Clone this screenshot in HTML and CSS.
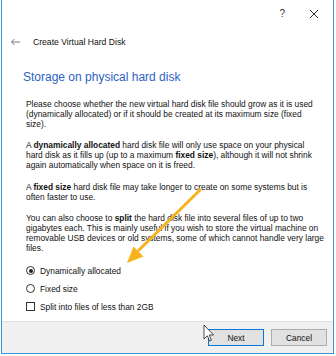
FILE: index.html
```html
<!DOCTYPE html>
<html lang="en">
<head>
  <meta charset="UTF-8">
  <title>Create Virtual Hard Disk</title>
  <link rel="stylesheet" href="styles.css">
</head>
<body>
  <div class="window">
    <div class="titlebar">
      <span class="help">?</span>
      <svg class="close" width="10" height="10" viewBox="0 0 10 10">
        <path d="M1 1 L9 9 M9 1 L1 9" stroke="#333" stroke-width="1"/>
      </svg>
    </div>

    <div class="nav">
      <svg class="back" width="10" height="8" viewBox="0 0 10 8">
        <path d="M10 4 H1.5 M4.5 1 L1.5 4 L4.5 7" fill="none" stroke="#777" stroke-width="1"/>
      </svg>
      <span class="nav-title">Create Virtual Hard Disk</span>
    </div>

    <h1 class="heading">Storage on physical hard disk</h1>

    <div class="content">
      <p>Please choose whether the new virtual hard disk file should grow as it is used<br>(dynamically allocated) or if it should be created at its maximum size (fixed<br>size).</p>
      <p>A <b>dynamically allocated</b> hard disk file will only use space on your physical<br>hard disk as it fills up (up to a maximum <b>fixed size</b>), although it will not shrink<br>again automatically when space on it is freed.</p>
      <p>A <b>fixed size</b> hard disk file may take longer to create on some systems but is<br>often faster to use.</p>
      <p>You can also choose to <b>split</b> the hard disk file into several files of up to two<br>gigabytes each. This is mainly useful if you wish to store the virtual machine on<br>removable USB devices or old systems, some of which cannot handle very large<br>files.</p>

      <div class="options">
        <div class="option"><span class="radio checked"></span>Dynamically allocated</div>
        <div class="option"><span class="radio"></span>Fixed size</div>
        <div class="option"><span class="check"></span>Split into files of less than 2GB</div>
      </div>
    </div>

    <div class="footer">
      <button class="btn default">Next</button>
      <button class="btn">Cancel</button>
    </div>
  </div>

  <!-- annotation arrow and mouse pointer drawn over the dialog -->
  <svg class="overlay" width="336" height="356" viewBox="0 0 336 356">
    <line x1="200" y1="190" x2="139" y2="250" stroke="#f6b31c" stroke-width="3" stroke-linecap="round"/>
    <polygon points="127,263 143.5,256.5 133.5,246.5" fill="#f6b31c"/>
    <path d="M204 325 L204 339 L207.3 335.8 L209.6 341 L211.4 340.2 L209.2 335 L213.6 335 Z" fill="#fff" stroke="#222" stroke-width="0.8"/>
  </svg>
</body>
</html>
```

FILE: styles.css
```css
body {
  margin: 0;
  background-color: #fff;
  font-family: 'Liberation Sans', Arial, sans-serif;
  color: #111;
}

.window {
  position: relative;
  box-sizing: border-box;
  width: 333px;
  height: 354px;
  margin-left: 1px;
  border: 1px solid #3b96dc;
  border-top: none;
  display: flex;
  flex-direction: column;
}

.titlebar {
  height: 27px;
  display: flex;
  justify-content: flex-end;
  align-items: center;
  gap: 24px;
  padding-right: 14px;
}

.help {
  font-size: 10px;
  color: #333;
}

.nav {
  height: 30px;
  display: flex;
  align-items: center;
  padding-left: 8px;
}

.back {
  margin-right: 13px;
}

.nav-title {
  font-size: 8.6px;
  color: #111;
}

.heading {
  margin: 13px 0 0 21px;
  font-size: 12px;
  font-weight: normal;
  color: #2d62c4;
}

.content {
  padding: 16px 2px 0 24px;
  flex: 1;
}

.content p {
  margin: 0 0 12px;
  font-size: 8.4px;
  line-height: 9.8px;
  white-space: nowrap;
}

.options {
  display: flex;
  flex-direction: column;
  gap: 8px;
  font-size: 8.4px;
}

.option {
  display: flex;
  align-items: center;
  height: 10px;
}

.radio {
  box-sizing: border-box;
  width: 9px;
  height: 9px;
  margin-right: 5px;
  border: 1px solid #333;
  border-radius: 50%;
  display: flex;
  justify-content: center;
  align-items: center;
}

.radio.checked::after {
  content: "";
  width: 4px;
  height: 4px;
  border-radius: 50%;
  background-color: #222;
}

.check {
  box-sizing: border-box;
  width: 9px;
  height: 9px;
  margin-right: 5px;
  border: 1px solid #333;
}

.footer {
  height: 32px;
  box-sizing: border-box;
  border-top: 1px solid #dfdfdf;
  background-color: #f0f0f0;
  display: flex;
  justify-content: flex-end;
  align-items: center;
  gap: 7px;
  padding-right: 6px;
}

.btn {
  box-sizing: border-box;
  width: 56px;
  height: 17px;
  padding: 0;
  font-family: 'Liberation Sans', Arial, sans-serif;
  font-size: 8.4px;
  color: #111;
  background-color: #e1e1e1;
  border: 1px solid #adadad;
}

.btn.default {
  border-color: #0a78d6;
}

.overlay {
  position: absolute;
  top: 0;
  left: 0;
}
```
